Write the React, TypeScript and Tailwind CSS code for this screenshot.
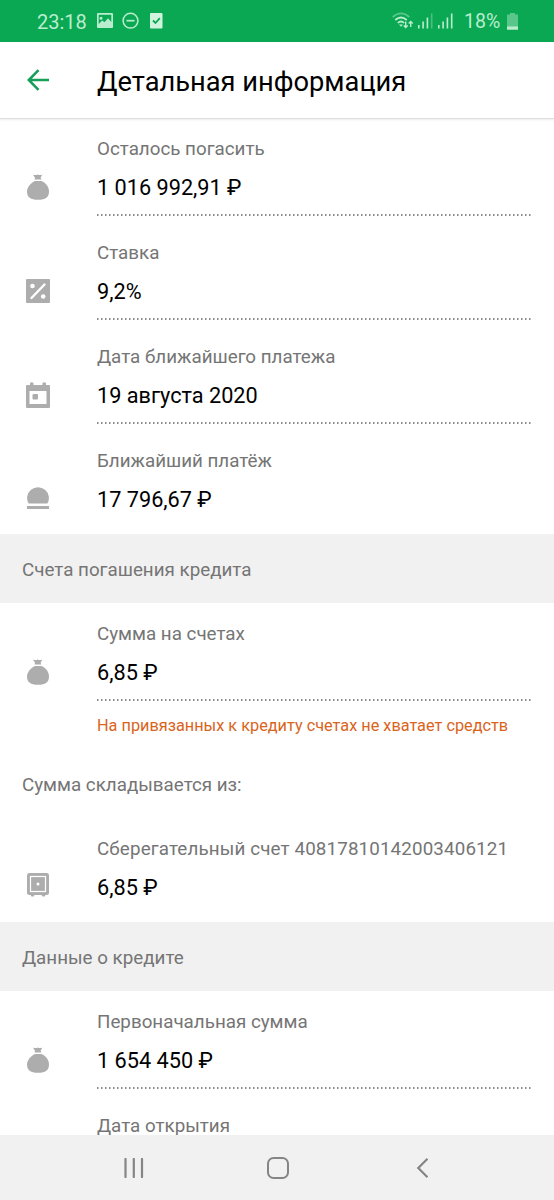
import type { ReactNode } from "react";

const DOTTED_LINE_CLASS =
  "h-[2px] bg-[repeating-linear-gradient(to_right,#8a8a8a_0_1px,#c4c4c4_1px_2px,transparent_2px_4px)]";

function BagIcon() {
  return (
    <svg width="24" height="26" viewBox="-1 0.5 24 26" fill="#adadad">
      <path d="M5.9 1Q8.5 2.2 10.6 1Q13 2.2 15.4 1L13.6 4.3L14.4 6H7.6L8 4.3Z" />
      <path d="M8 7.5H14.4C19 9.3 22 13.4 22 18C22 23.8 18.5 26.3 11 26.3S0 23.8 0 18C0 13.4 4 9.3 8 7.5Z" />
    </svg>
  );
}

function PercentIcon() {
  return (
    <svg width="24" height="24" viewBox="0 0 24 24">
      <rect width="24" height="24" rx="1" fill="#adadad" />
      <path d="M5.5 19L18.5 5.5" stroke="#fff" strokeWidth="2.4" strokeLinecap="round" />
      <circle cx="6.5" cy="7" r="2.3" fill="#fff" />
      <circle cx="17.2" cy="17.5" r="2.3" fill="#fff" />
    </svg>
  );
}

function CalendarIcon() {
  return (
    <svg width="24" height="26" viewBox="0 0 24 26">
      <path
        fill="#adadad"
        fillRule="evenodd"
        d="M1 3H4V1Q5.7 -.5 7.5 1V3H16.5V1Q18.2 -.5 20 1V3H23Q24 3 24 4V25Q24 26 23 26H1Q0 26 0 25V4Q0 3 1 3ZM3.5 9V22H20.5V9Z"
      />
      <rect x="6.5" y="12" width="5.5" height="5.5" rx="1" fill="#adadad" />
    </svg>
  );
}

function CoinIcon() {
  return (
    <svg width="22" height="24" viewBox="0 0 22 24" fill="#adadad">
      <path d="M1.6 16.6A10.9 10.9 0 1 1 20.4 16.6Z" />
      <rect y="19" width="22" height="3" />
    </svg>
  );
}

function SafeIcon() {
  return (
    <svg width="22" height="28" viewBox="0 0 22 28">
      <rect width="22" height="22" rx="2.5" fill="#adadad" />
      <path d="M3.5 22H7.5L6.5 23.5H4.5ZM14.5 22H18.5L17.5 23.5H15.5Z" fill="#adadad" />
      <rect x="3.5" y="3.5" width="15" height="15" fill="none" stroke="#fff" strokeWidth="1.2" />
      <circle cx="11" cy="11" r="1.5" fill="#fff" />
    </svg>
  );
}

function SignalIcon({ faded = false }: { faded?: boolean }) {
  return (
    <svg width="15" height="16" viewBox="0 0 15 16" fill="#b9edcd">
      <rect x="0" y="12" width="1.6" height="3.5" />
      <rect x="4.3" y="8.5" width="1.6" height="7" />
      <rect x="8.6" y="4.5" width="1.6" height="11" />
      <rect x="12.9" y="0.5" width="1.6" height="15" opacity={faded ? 0.35 : 1} />
    </svg>
  );
}

function StatusBar() {
  return (
    <div className="flex h-[42px] shrink-0 items-center bg-[#0ba854] pl-[37px] pr-[36px] text-[20px] text-[#b9edcd]">
      <span className="w-[60px] pt-[2px] leading-[40px]">23:18</span>
      <svg width="66" height="18" viewBox="0 0 66 18" fill="none">
        <path
          fill="#b9edcd"
          fillRule="evenodd"
          d="M1 1H15Q16 1 16 2V15Q16 16 15 16H1Q0 16 0 15V2Q0 1 1 1ZM1.7 2.7V12L5.2 8.5L7.5 10.3L11 6.3L14.3 10V2.7ZM5.5 6.2A1.5 1.5 0 1 1 2.5 6.2A1.5 1.5 0 1 1 5.5 6.2Z"
        />
        <circle cx="33.5" cy="8.7" r="7.4" stroke="#b9edcd" strokeWidth="1.5" />
        <path d="M29.5 8.7H37.5" stroke="#b9edcd" strokeWidth="1.7" />
        <rect x="53" y="1" width="12.5" height="15.5" rx="1" fill="#d0f3de" />
        <path d="M56 8.5L58.5 11L62.8 6.2" stroke="#0ba854" strokeWidth="1.8" />
      </svg>
      <div className="ml-auto flex items-center">
        <svg width="22" height="18" viewBox="0 0 22 18" fill="none" stroke="#b9edcd" strokeWidth="1.7">
          <path d="M.7 5Q9 -2.4 17.3 5" opacity=".45" />
          <path d="M3.2 8Q9 3 14.8 8" />
          <path d="M5.8 11Q9 8 12.2 11" />
          <path d="M7 12.5L9 14.7L11 12.5Z" fill="#b9edcd" stroke="none" />
          <path d="M13.7 9.5V15.5M11.7 13.5L13.7 15.6L15.7 13.5M18.7 15V9.5M16.7 11.5L18.7 9.4L20.7 11.5" strokeWidth="1.4" />
        </svg>
        <span className="ml-[4px]">
          <SignalIcon faded />
        </span>
        <span className="ml-[5px]">
          <SignalIcon />
        </span>
        <span className="ml-[11px] w-[43px] pt-[2px] text-[19.5px] leading-[40px]">18%</span>
        <svg width="11" height="17" viewBox="0 0 11 17" fill="#b9edcd">
          <path d="M3 0H8V1.5H11V17H0V1.5H3Z" opacity=".45" />
          <rect y="13.5" width="11" height="3" />
        </svg>
      </div>
    </div>
  );
}

function Header() {
  return (
    <header className="flex h-[77px] shrink-0 items-center border-b border-[#dedede] bg-white pl-[27px] shadow-[0_1px_2px_rgba(0,0,0,0.08)]">
      <svg width="22" height="22" viewBox="0 0 22 22" fill="none" stroke="#159f57" strokeWidth="2.5">
        <path d="M22 11H2M11.5 1.2L1.8 11L11.5 20.8" />
      </svg>
      <h1 className="ml-[48px] whitespace-nowrap pt-[4px] text-[27.25px] leading-[32px] text-black">
        Детальная информация
      </h1>
    </header>
  );
}

type InfoRowProps = {
  icon?: ReactNode;
  label: string;
  value?: string;
  underlined?: boolean;
  labelClass?: string;
};

function InfoRow({ icon, label, value, underlined = true, labelClass = "" }: InfoRowProps) {
  return (
    <div className="flex h-[104px] pr-[22px]">
      <div className="mt-[49px] flex h-[52px] w-[97px] shrink-0 items-center justify-center pr-[21px]">
        {icon}
      </div>
      <div className="flex grow flex-col whitespace-nowrap pt-[25px]">
        <div className={`text-[18.8px] leading-[24px] text-[#757575] ${labelClass}`}>{label}</div>
        <div className="mt-[13px] text-[21.7px] leading-[28px] text-black">{value}</div>
        {underlined ? <div className={`mt-auto ${DOTTED_LINE_CLASS}`} /> : null}
      </div>
    </div>
  );
}

function SectionTitle({ children }: { children: ReactNode }) {
  return (
    <h2 className="h-[69px] bg-[#f1f1f1] pl-[22px] text-[18.8px] leading-[73px] text-[#757575]">
      {children}
    </h2>
  );
}

function NavigationBar() {
  return (
    <nav className="flex h-[65px] shrink-0 items-center bg-[#f1f1f1] pl-[124px]">
      <svg width="20" height="20" viewBox="0 0 20 20" stroke="#858585" strokeWidth="2.2" strokeLinecap="round">
        <path d="M1.5 1V19M9.8 1V19M18 1V19" />
      </svg>
      <svg
        className="ml-[123px]"
        width="22"
        height="22"
        viewBox="0 0 22 22"
        fill="none"
        stroke="#858585"
        strokeWidth="2"
      >
        <rect x="1" y="1" width="20" height="20" rx="5.5" />
      </svg>
      <svg
        className="ml-[127px]"
        width="12"
        height="20"
        viewBox="0 0 12 20"
        fill="none"
        stroke="#858585"
        strokeWidth="2.2"
      >
        <path d="M11.5 .8L2.3 10L11.5 19.2" />
      </svg>
    </nav>
  );
}

export default function App() {
  return (
    <div className="flex h-[1200px] w-[554px] flex-col overflow-hidden bg-white font-[Roboto,sans-serif]">
      <StatusBar />
      <Header />
      <main className="min-h-0 flex-1 overflow-hidden">
        <div className="-mt-[7px]">
          <InfoRow icon={<BagIcon />} label="Осталось погасить" value="1 016 992,91 ₽" />
          <InfoRow icon={<PercentIcon />} label="Ставка" value="9,2%" />
          <InfoRow icon={<CalendarIcon />} label="Дата ближайшего платежа" value="19 августа 2020" />
          <InfoRow icon={<CoinIcon />} label="Ближайший платёж" value="17 796,67 ₽" underlined={false} />
        </div>
        <div className="mt-[6px]">
          <SectionTitle>Счета погашения кредита</SectionTitle>
        </div>
        <div className="-mt-[6px]">
          <InfoRow icon={<BagIcon />} label="Сумма на счетах" value="6,85 ₽" />
        </div>
        <p className="mt-[13px] whitespace-nowrap pl-[97px] text-[16.3px] leading-[24px] text-[#d9651d]">
          На привязанных к кредиту счетах не хватает средств
        </p>
        <p className="mt-[34px] pl-[22px] text-[18.8px] leading-[26px] text-[#757575]">
          Сумма складывается из:
        </p>
        <div className="mt-[14px]">
          <InfoRow
            icon={<SafeIcon />}
            label="Сберегательный счет 40817810142003406121"
            value="6,85 ₽"
            underlined={false}
            labelClass="tracking-[0.13px]"
          />
        </div>
        <div className="mt-[6px]">
          <SectionTitle>Данные о кредите</SectionTitle>
        </div>
        <div className="-mt-[6px]">
          <InfoRow icon={<BagIcon />} label="Первоначальная сумма" value="1 654 450 ₽" />
          <InfoRow label="Дата открытия" />
        </div>
      </main>
      <NavigationBar />
    </div>
  );
}
